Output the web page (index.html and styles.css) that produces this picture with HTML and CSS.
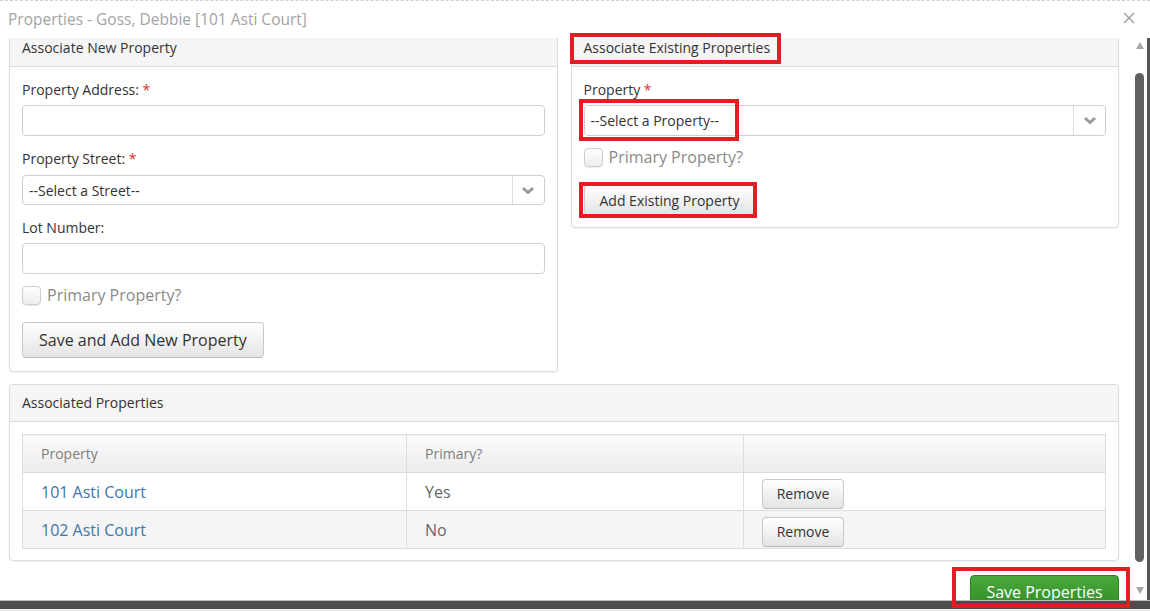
FILE: index.html
```html
<!DOCTYPE html>
<html>
<head>
<meta charset="utf-8">
<link rel="stylesheet" href="styles.css">
</head>
<body>
<div class="dialog">
  <div class="titlebar">
    <span class="title">Properties - Goss, Debbie [101 Asti Court]</span>
    <svg class="close" width="12" height="12" viewBox="0 0 12 12"><path d="M1 1L11 11M11 1L1 11" stroke="#9a9a9a" stroke-width="1.3" fill="none"/></svg>
  </div>
  <div class="viewport">
    <div class="content">
      <div class="inner">
        <div class="top-grid">
          <div class="panel">
            <div class="panel-heading">Associate New Property</div>
            <div class="panel-body">
              <div class="form-group">
                <label class="lbl">Property Address: <span class="req">*</span></label>
                <div class="input"></div>
              </div>
              <div class="form-group">
                <label class="lbl">Property Street: <span class="req">*</span></label>
                <div class="select"><span class="select-text">--Select a Street--</span><span class="select-arrow"><svg width="14" height="9" viewBox="0 0 14 9"><path d="M2 2L7 6.5L12 2" stroke="#9b9b9b" stroke-width="3" fill="none"/></svg></span></div>
              </div>
              <div class="form-group">
                <label class="lbl">Lot Number:</label>
                <div class="input"></div>
              </div>
              <div class="check-row"><span class="checkbox"></span><span class="check-label">Primary Property?</span></div>
              <button class="btn btn-lg">Save and Add New Property</button>
            </div>
          </div>
          <div class="panel panel-right">
            <div class="panel-heading">Associate Existing Properties</div>
            <div class="panel-body body-right">
              <div class="form-group-r">
                <label class="lbl">Property <span class="req">*</span></label>
                <div class="select"><span class="select-text">--Select a Property--</span><span class="select-arrow"><svg width="14" height="9" viewBox="0 0 14 9"><path d="M2 2L7 6.5L12 2" stroke="#9b9b9b" stroke-width="3" fill="none"/></svg></span></div>
              </div>
              <div class="check-row check-row-r"><span class="checkbox"></span><span class="check-label">Primary Property?</span></div>
              <button class="btn btn-sm">Add Existing Property</button>
            </div>
          </div>
        </div>
        <div class="panel panel-assoc">
          <div class="panel-heading heading-assoc">Associated Properties</div>
          <div class="panel-body body-assoc">
            <table class="tbl">
              <colgroup><col class="c1"><col class="c2"><col class="c3"></colgroup>
              <thead><tr><th>Property</th><th>Primary?</th><th></th></tr></thead>
              <tbody>
                <tr><td><span class="link">101 Asti Court</span></td><td class="muted">Yes</td><td><button class="btn btn-remove">Remove</button></td></tr>
                <tr class="alt"><td><span class="link">102 Asti Court</span></td><td class="muted">No</td><td><button class="btn btn-remove">Remove</button></td></tr>
              </tbody>
            </table>
          </div>
        </div>
        <div class="footer-row"><button class="btn-save">Save Properties</button></div>
      </div>
    </div>
    <div class="scrollbar">
      <span class="arrow-up"></span>
      <span class="thumb"></span>
      <span class="arrow-down"></span>
    </div>
    <div class="edge"></div>
  </div>
  <div class="bottom-bar"></div>
</div>
<div class="annotations">
  <span class="mark mark-1"></span>
  <span class="mark mark-2"></span>
  <span class="mark mark-3"></span>
  <span class="mark mark-4"></span>
</div>
</body>
</html>
```

FILE: styles.css
```css
* { box-sizing: border-box; }
html, body { margin: 0; padding: 0; }
body {
  width: 1150px;
  height: 611px;
  overflow: hidden;
  font-family: "Open Sans", "Liberation Sans", sans-serif;
  color: #333;
  background: #fff;
  position: relative;
}
.dialog {
  width: 1150px;
  height: 611px;
  display: flex;
  flex-direction: column;
  border-top: 1px dashed #d0d0d0;
}
.titlebar {
  height: 37px;
  flex: none;
  display: flex;
  align-items: center;
  justify-content: space-between;
  padding: 0 15px 0 8px;
}
.title {
  font-size: 15.5px;
  color: #a3a3a3;
  line-height: 22px;
  margin-top: -2px;
}
.close { margin-top: -3px; }
.viewport {
  height: 562px;
  flex: none;
  display: flex;
}
.content {
  flex: 1;
  overflow: hidden;
}
.inner {
  margin-top: -9px;
  padding: 0 13px 0 9px;
}
.top-grid {
  display: grid;
  grid-template-columns: 1fr 1fr;
  column-gap: 13px;
  align-items: start;
}
.panel {
  border: 1px solid #dcdcdc;
  border-radius: 4px;
  background: #fff;
  box-shadow: 0 1px 2px rgba(0,0,0,0.06);
}
.panel-heading {
  background: #f5f5f5;
  border-bottom: 1px solid #dcdcdc;
  padding: 8px 12px;
  font-size: 14px;
  line-height: 20px;
  color: #333;
  border-radius: 3px 3px 0 0;
}
.panel-body {
  padding: 13px 12px 13px 12px;
}
.body-right { padding-bottom: 12px; }
.lbl {
  display: block;
  font-size: 14px;
  line-height: 20px;
  margin-bottom: 6px;
  color: #333;
}
.form-group:first-child .lbl,
.form-group-r .lbl { margin-bottom: 5px; }
.req { color: #e0302d; }
.form-group { margin-bottom: 13px; }
.form-group:nth-child(3) { margin-bottom: 0; }
.form-group:nth-child(3) .lbl { margin-bottom: 5px; }
.input {
  height: 31px;
  border: 1px solid #cfcfcf;
  border-radius: 4px;
  background: #fff;
}
.select {
  height: 30px;
  border: 1px solid #cfcfcf;
  border-radius: 4px;
  background: #fff;
  display: flex;
  align-items: center;
}
.form-group-r .select { height: 31px; }
.select-text {
  flex: 1;
  padding-left: 6px;
  font-size: 14px;
  color: #333;
}
.select-arrow {
  width: 32px;
  align-self: stretch;
  border-left: 1px solid #dcdcdc;
  display: flex;
  align-items: center;
  justify-content: center;
}
.check-row {
  display: flex;
  align-items: center;
  height: 22px;
  margin: 10px 0 16px;
}
.check-row-r { margin: 10px 0 17px; }
.checkbox {
  width: 19px;
  height: 19px;
  border: 1px solid #cdcdcd;
  border-radius: 4px;
  background: linear-gradient(#ffffff, #ececec);
  box-shadow: 0 1px 1px rgba(0,0,0,0.08);
  margin-right: 6px;
}
.check-label {
  font-size: 16px;
  color: #8a8a8a;
}
.btn {
  font-family: "Open Sans", "Liberation Sans", sans-serif;
  color: #333;
  background: linear-gradient(#ffffff, #e4e4e4);
  border: 1px solid #c8c8c8;
  border-bottom-color: #b8b8b8;
  border-radius: 4px;
  cursor: default;
  display: block;
}
.btn-lg {
  height: 36px;
  font-size: 16px;
  padding: 0 16px;
}
.btn-sm {
  height: 30px;
  font-size: 14px;
  padding: 0 15px;
}
.panel-assoc { margin-top: 12px; }
.body-assoc { padding: 12px 12px 11px 12px; }
.tbl {
  width: 100%;
  border-collapse: collapse;
  table-layout: fixed;
  border: 1px solid #dcdcdc;
}
.c1 { width: 384px; }
.c2 { width: 337px; }
.tbl th {
  height: 38px;
  text-align: left;
  font-weight: normal;
  font-size: 14px;
  color: #7d7d7d;
  padding: 0 18px;
  background: linear-gradient(#fbfbfb, #ececec);
  border: 1px solid #dcdcdc;
}
.tbl td {
  height: 38px;
  font-size: 16px;
  padding: 0 18px;
  border: 1px solid #dcdcdc;
  vertical-align: middle;
}
.tbl tr.alt td { background: #f5f5f5; }
.link { color: #3f76ab; }
.muted { color: #666; }
.btn-remove {
  height: 30px;
  width: 82px;
  font-size: 14px;
  padding: 0;
  margin-top: 4px;
  margin-bottom: 0;
}
.footer-row {
  display: flex;
  justify-content: flex-end;
  margin-top: 14px;
}
.btn-save {
  font-family: "Open Sans", "Liberation Sans", sans-serif;
  height: 35px;
  padding: 0 15px 2px;
  font-size: 16px;
  color: #fff;
  background: linear-gradient(#4aa83d, #2e8d22);
  border: 1px solid #2b8420;
  border-radius: 4px;
  width: 149px;
}
.scrollbar {
  width: 15px;
  flex: none;
  position: relative;
  display: flex;
  flex-direction: column;
  align-items: center;
  background: #fff;
}
.arrow-up {
  margin-top: 4px;
  width: 0; height: 0;
  border-left: 4.5px solid transparent;
  border-right: 4.5px solid transparent;
  border-bottom: 7px solid #a6a6a6;
}
.thumb {
  margin-top: 24px;
  width: 9px;
  height: 489px;
  border-radius: 5px;
  background: #606060;
}
.arrow-down {
  margin-top: 25px;
  width: 0; height: 0;
  border-left: 4.5px solid transparent;
  border-right: 4.5px solid transparent;
  border-top: 7px solid #a6a6a6;
}
.edge {
  width: 3px;
  flex: none;
  background: #555;
}
.bottom-bar {
  height: 11px;
  flex: none;
  border-top: 1px solid #bdbdbd;
  border-bottom: 2px solid #ececec;
  background: #4d4d4d;
}
.annotations {
  position: absolute;
  left: 0; top: 0;
  width: 0; height: 0;
}
.mark {
  position: absolute;
  border: 4px solid #e61c25;
}
.mark-1 { left: 570px; top: 33px; width: 211px; height: 31px; }
.mark-2 { left: 579px; top: 99px; width: 160px; height: 42px; }
.mark-3 { left: 579px; top: 182px; width: 178px; height: 36px; }
.mark-4 { left: 952px; top: 567px; width: 178px; height: 41px; }
```
